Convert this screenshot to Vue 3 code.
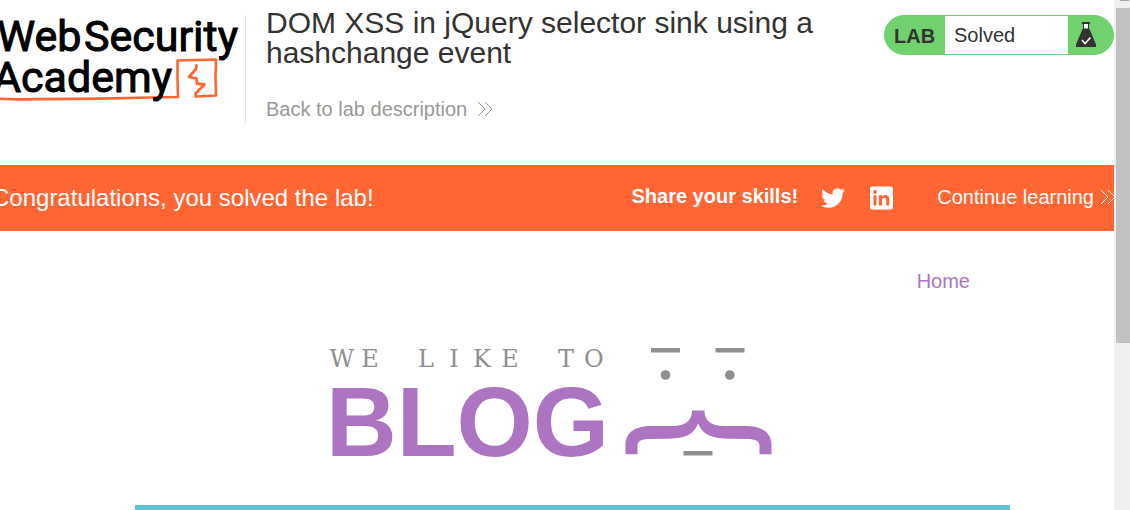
<script setup>
const tagline = [...'WE LIKE TO']
</script>

<template>
  <div class="page">
    <main class="content">
      <header class="lab-header">
        <a class="academy" href="#" aria-label="Web Security Academy">
          <svg width="245" height="108" viewBox="0 0 245 108">
            <g class="wordmark">
              <text x="-3" y="51">Web</text>
              <text x="84" y="51">Security</text>
            </g>
            <g fill="none" stroke="#ff6633" stroke-linejoin="round" stroke-linecap="round">
              <path stroke-width="2.6" d="M0 98.800 L18 99.400 L100 98.600 L150 97.500 L178 97 L177.500 78 L177.500 60.500 L216 59.500 L215.500 77 L216 95.500 L196 96.500" />
              <path stroke-width="2.8" d="M196 96.500 L195.500 93.500 L204.500 84.500 L197 83.500 L196.500 78.500 L189 77 L196 69 L196.500 65.500" />
            </g>
            <g class="wordmark">
              <text x="-7" y="92">Academy</text>
            </g>
          </svg>
        </a>
        <div class="title-block">
          <h1>DOM XSS in jQuery selector sink using a hashchange event</h1>
          <a class="back" href="#">
            Back to lab description
            <svg class="chevrons" width="16" height="16" viewBox="0 0 16 16">
              <path d="M1 1L8 8L1 15M8 1L15 8L8 15" />
            </svg>
          </a>
        </div>
        <div class="status">
          <strong>LAB</strong>
          <span class="state">Solved</span>
          <span class="flask">
            <svg width="20" height="26" viewBox="0 0 20 26">
              <path fill="#fff" stroke="#333332" d="M7.500 1.500H12.500V7H7.500Z" />
              <path fill="#333332" d="M6 0H14V2H6ZM6.500 7H13.500L20 22.500V25H0V22.500Z" />
              <path fill="none" stroke="#fff" stroke-width="1.6" d="M6 18L9 21.500L14.500 15.500" />
            </svg>
          </span>
        </div>
      </header>

      <section class="banner">
        <p class="congrats">Congratulations, you solved the lab!</p>
        <strong class="share">Share your skills!</strong>
        <a class="social" href="#" aria-label="Twitter">
          <svg width="24" height="24" viewBox="0 0 24 24">
            <path fill="#fff" d="M23.953 4.570a10 10 0 01-2.825.775 4.958 4.958 0 002.163-2.723c-.951.555-2.005.959-3.127 1.184a4.920 4.920 0 00-8.384 4.482C7.690 8.095 4.067 6.130 1.640 3.162a4.822 4.822 0 00-.666 2.475c0 1.710.870 3.213 2.188 4.096a4.904 4.904 0 01-2.228-.616v.060a4.923 4.923 0 003.946 4.827 4.996 4.996 0 01-2.212.085 4.936 4.936 0 004.604 3.417 9.867 9.867 0 01-6.102 2.105c-.390 0-.779-.023-1.170-.067a13.995 13.995 0 007.557 2.209c9.053 0 13.998-7.496 13.998-13.985 0-.210 0-.420-.015-.630A9.935 9.935 0 0024 4.590z" />
          </svg>
        </a>
        <a class="social" href="#" aria-label="LinkedIn">
          <svg width="24" height="24" viewBox="0 0 24 24">
            <rect x="1" y="0.500" width="23" height="23" rx="2" fill="#fff" />
            <path fill="#ff6633" d="M4.500 9.200H7.500V19.500H4.500ZM10 9.200H13V10.700C13.800 9.500 15 9 16.300 9C19 9 20.200 10.800 20.200 13.800V19.500H17.200V14.300C17.200 12.500 16.600 11.700 15.300 11.700C13.700 11.700 13 12.800 13 14.500V19.500H10Z" />
            <circle cx="6" cy="6" r="1.900" fill="#ff6633" />
          </svg>
        </a>
        <a class="continue" href="#">
          Continue learning
          <svg class="chevrons" width="16" height="16" viewBox="0 0 16 16">
            <path d="M1 1L8 8L1 15M8 1L15 8L8 15" />
          </svg>
        </a>
      </section>

      <section class="blog">
        <nav><a href="#">Home</a></nav>
        <div class="blog-logo">
          <div class="lettering">
            <div class="tagline">
              <span v-for="(letter, i) in tagline" :key="i">{{ letter }}</span>
            </div>
            <div class="blog-name">BLOG</div>
          </div>
          <svg width="148" height="110" viewBox="0 0 148 110">
            <g fill="#8f8f8f">
              <rect x="26" y="1" width="29" height="4.500" />
              <rect x="90.500" y="1" width="29" height="4.500" />
              <circle cx="40.500" cy="28" r="4.800" />
              <circle cx="104.800" cy="28" r="4.800" />
              <rect x="58.500" y="104" width="29" height="4.500" />
            </g>
            <path fill="#ad74c2" d="M67 63.500H79.500C79.500 74 86 78.800 99 78.900L120 79C138 79 146.500 86 146.500 98V107.300H134.500V98C134 94 131 91.900 122 91.900L107 91.800C87 91.800 78 88 73.200 76.500C68 88 60 91.800 40 91.800L25 91.900C16 91.900 13 94 12.500 98V107.300H0.500V98C0.500 86 9 79 27 79L48 78.900C60 78.800 67 74 67 63.500Z" />
          </svg>
        </div>
        <div class="rule"></div>
      </section>
    </main>
    <div class="scrollbar">
      <svg width="14" height="8" viewBox="0 0 14 8"><path fill="#a3a3a3" d="M4 0H13V1H4Z" /></svg>
      <div class="thumb"></div>
    </div>
  </div>
</template>

<style>
body {
  background: #fff;
}
</style>

<style scoped>
.page {
  display: flex;
  min-height: 100vh;
  overflow: hidden;
  font-family: "Liberation Sans", Arial, sans-serif;
  font-size: 20px;
  line-height: 24px;
  color: #333332;
}
a {
  color: inherit;
  text-decoration: none;
}
svg {
  display: block;
  flex: none;
}
.content {
  flex: 1;
  min-width: 0;
  overflow: hidden;
}
.lab-header {
  display: flex;
  align-items: flex-start;
  height: 165px;
}
.wordmark {
  font-family: Roboto, sans-serif;
  font-size: 43px;
  fill: #000;
  stroke: #000;
  stroke-width: 1;
}
.title-block {
  flex: 1;
  margin-top: 15px;
  height: 108px;
  padding-left: 20px;
  border-left: 1px solid #e4e4e4;
}
h1 {
  max-width: 580px;
  margin: -7px 0 29px;
  font-size: 30px;
  line-height: 30px;
  font-weight: 400;
}
.back {
  display: inline-flex;
  align-items: center;
  gap: 10px;
  color: #999;
}
.chevrons path {
  fill: none;
  stroke: currentColor;
}
.status {
  display: flex;
  align-items: stretch;
  box-sizing: border-box;
  width: 230px;
  height: 40px;
  margin-top: 15px;
  border: 1px solid #70d16e;
  border-radius: 20px;
  background: #70d16e;
  overflow: hidden;
  line-height: 40px;
}
.status strong {
  width: 60px;
  box-sizing: border-box;
  padding-left: 9px;
}
.state {
  flex: 1;
  padding-left: 9px;
  background: #fff;
  line-height: 38px;
}
.flask {
  display: flex;
  align-items: center;
  width: 45px;
  box-sizing: border-box;
  padding-left: 8px;
}
.banner {
  display: flex;
  align-items: center;
  height: 66px;
  background: #ff6633;
  color: #fff;
  white-space: nowrap;
}
.congrats {
  flex: 1;
  margin: 0 0 0 -8px;
  font-size: 24px;
}
.share {
  margin-right: 23px;
  padding-bottom: 4px;
}
.social {
  margin-right: 24px;
}
.continue {
  display: flex;
  align-items: center;
  gap: 6px;
  margin-left: 20px;
  margin-right: -2px;
  padding-bottom: 2px;
}
.blog {
  margin: 0 104px 0 135px;
}
nav {
  padding: 38px 40px 0 0;
  text-align: right;
  color: #ad74c2;
}
.blog-logo {
  display: flex;
  justify-content: center;
  gap: 16px;
  margin: 54px 46px 33px 0;
}
.tagline {
  display: grid;
  grid-template-columns: repeat(10, 28px);
  padding-left: 2px;
  text-align: center;
  font-family: "DejaVu Serif", serif;
  font-size: 24px;
  line-height: 25px;
  color: #8f8f8f;
}
.blog-name {
  font-size: 98px;
  line-height: 100px;
  font-weight: 700;
  color: #ad74c2;
}
.rule {
  height: 5px;
  background: #5bc4d1;
}
.scrollbar {
  width: 14px;
  padding-left: 2px;
  background: #f0f0f0;
}
.thumb {
  height: 335px;
  background: #c1c1c1;
}
</style>
